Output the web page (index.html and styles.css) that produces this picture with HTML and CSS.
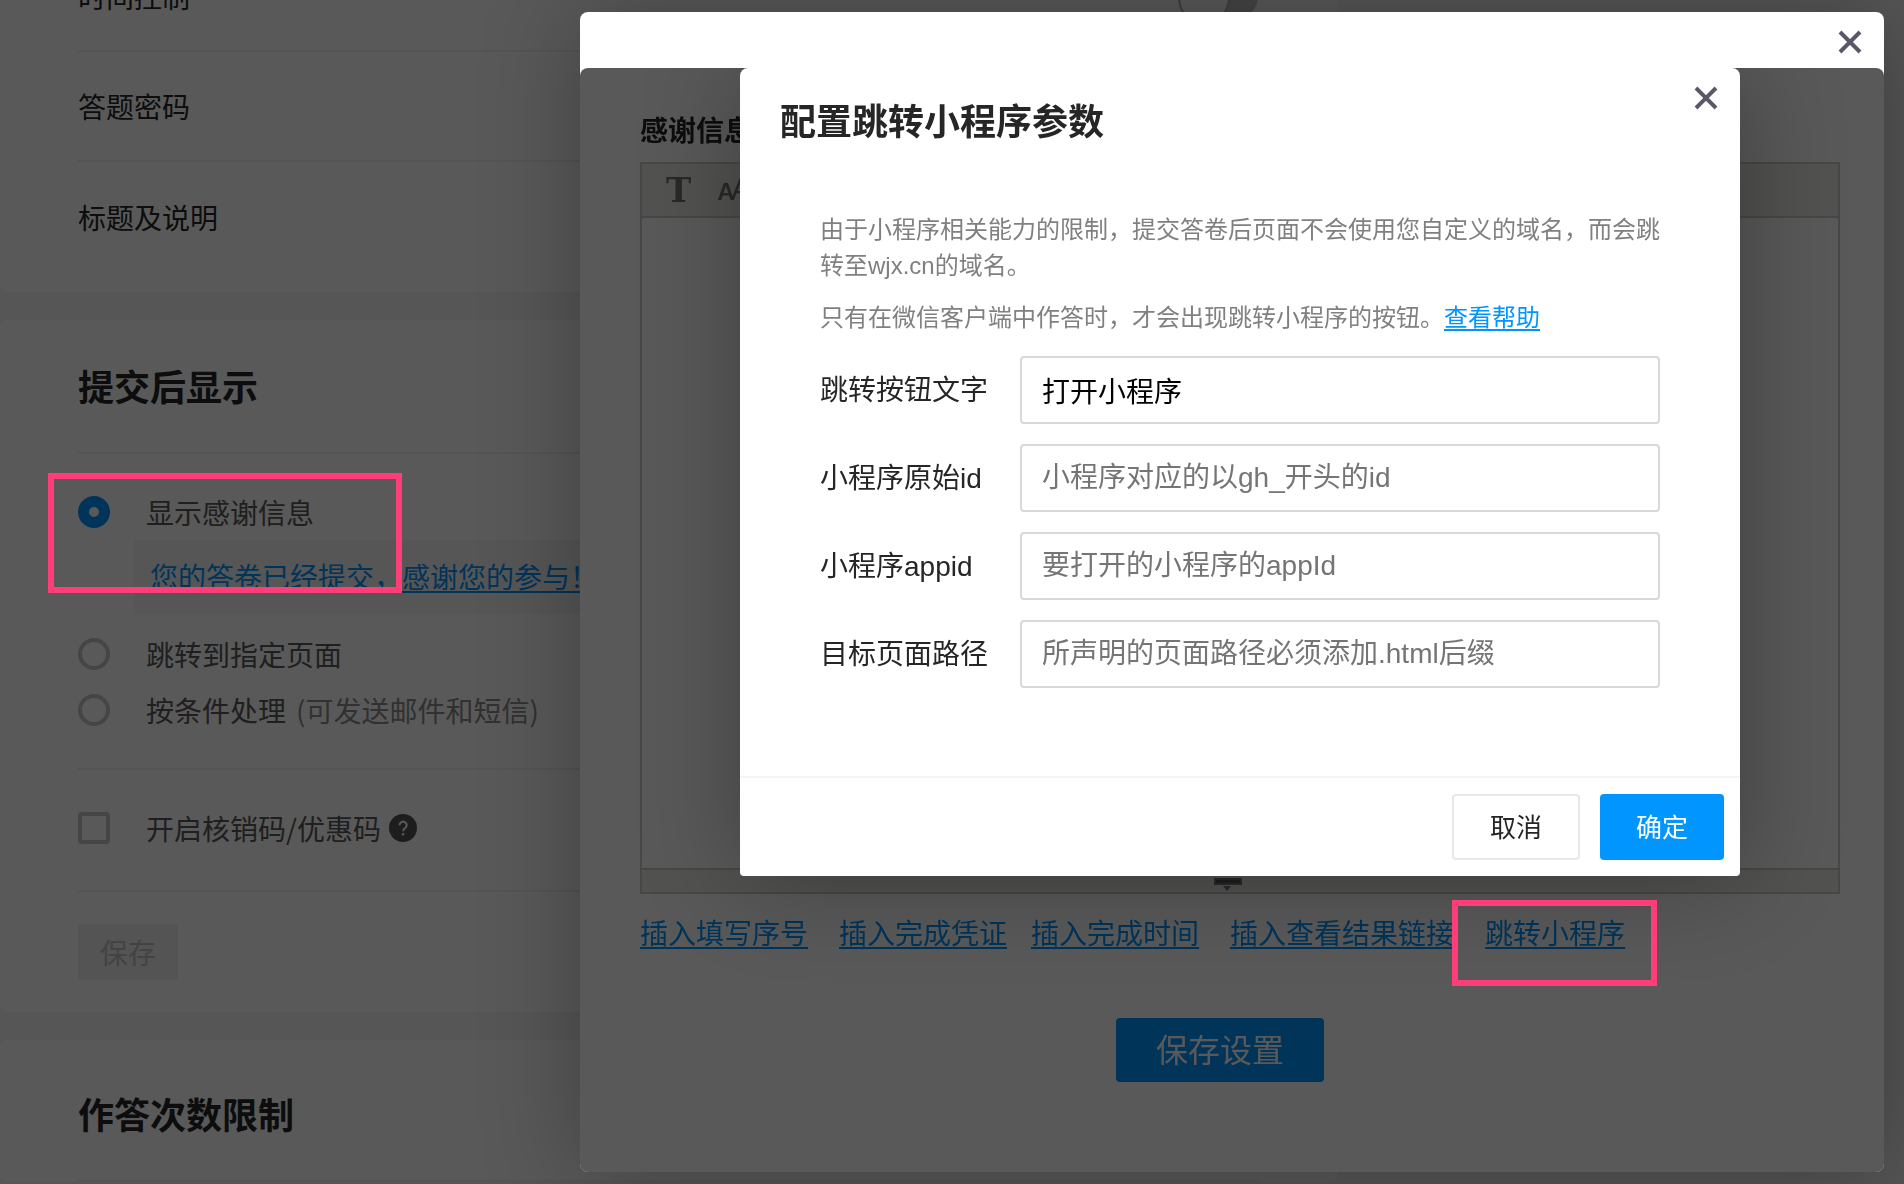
FILE: index.html
```html
<!DOCTYPE html>
<html lang="zh-CN">
<head>
  <meta charset="UTF-8">
  <meta name="viewport" content="width=device-width, initial-scale=1.0">
  <title>问卷设置</title>
  <link rel="stylesheet" href="styles.css">
</head>
<body>
  <main class="settings">
    <section class="panel">
      <div class="row">
        <label for="timeControl">时间控制</label>
        <input type="checkbox" class="switch" id="timeControl">
      </div>
      <div class="row">答题密码</div>
      <div class="row">标题及说明</div>
    </section>

    <section class="panel">
      <h2>提交后显示</h2>
      <div class="options">
        <div class="option">
          <input type="radio" name="afterSubmit" id="showThanks" checked>
          <label for="showThanks">显示感谢信息</label>
        </div>
        <div class="thanks-box"><a href="#">您的答卷已经提交，感谢您的参与！</a></div>
        <div class="option">
          <input type="radio" name="afterSubmit" id="jumpPage">
          <label for="jumpPage">跳转到指定页面</label>
        </div>
        <div class="option">
          <input type="radio" name="afterSubmit" id="byCondition">
          <label for="byCondition">按条件处理<span class="hint">(可发送邮件和短信)</span></label>
        </div>
      </div>
      <div class="option coupon">
        <input type="checkbox" class="check" id="coupon">
        <label for="coupon">开启核销码/优惠码</label>
        <svg class="help" viewBox="0 0 28 28" aria-hidden="true">
          <circle cx="14" cy="14" r="14" fill="#555"/>
          <path d="M10.500 11.200a3.600 3.600 0 1 1 5.600 3c-1.400.9-2 1.500-2 3" fill="none" stroke="#fff" stroke-width="2"/>
          <circle cx="14.100" cy="20.200" r="1.300" fill="#fff"/>
        </svg>
      </div>
      <div class="panel-foot">
        <button type="button" class="btn-save" disabled>保存</button>
      </div>
    </section>

    <section class="panel">
      <h2 class="tall">作答次数限制</h2>
    </section>
  </main>

  <div class="shade"></div>

  <div class="modal">
    <div class="modal-head">
      <button type="button" class="close" aria-label="关闭">
        <svg viewBox="0 0 24 24"><path d="M2 2L22 22M22 2L2 22"/></svg>
      </button>
    </div>
    <div class="frame">
      <div class="frame-body">
        <label class="editor-label" for="thanksText">感谢信息</label>
        <div class="editor">
          <div class="toolbar">
            <span class="tool-font">T</span>
            <span class="tool-size"><small>A</small>A</span>
          </div>
          <textarea id="thanksText"></textarea>
          <div class="statusbar">
            <svg viewBox="0 0 28 14" aria-hidden="true">
              <rect width="28" height="7" fill="#777"/>
              <rect x="2" y="2" width="24" height="3" fill="#555"/>
              <path d="M9 8h8l-4 5z" fill="#777"/>
            </svg>
          </div>
        </div>
        <div class="inserts">
          <a href="#">插入填写序号</a>
          <a href="#">插入完成凭证</a>
          <a href="#" class="close-by">插入完成时间</a>
          <a href="#">插入查看结果链接</a>
          <a href="#">跳转小程序</a>
        </div>
        <button type="button" class="btn-submit">保存设置</button>
      </div>

      <div class="shade"></div>

      <form class="dialog">
        <div class="dialog-head">
          <h3>配置跳转小程序参数</h3>
          <button type="button" class="close" aria-label="关闭">
            <svg viewBox="0 0 24 24"><path d="M2 2L22 22M22 2L2 22"/></svg>
          </button>
        </div>
        <div class="dialog-body">
          <p>由于小程序相关能力的限制，提交答卷后页面不会使用您自定义的域名，而会跳转至wjx.cn的域名。</p>
          <p>只有在微信客户端中作答时，才会出现跳转小程序的按钮。<a href="#">查看帮助</a></p>
          <div class="field">
            <label for="btnText">跳转按钮文字</label>
            <input type="text" id="btnText" value="打开小程序">
          </div>
          <div class="field">
            <label for="originId">小程序原始id</label>
            <input type="text" id="originId" placeholder="小程序对应的以gh_开头的id">
          </div>
          <div class="field">
            <label for="appId">小程序appid</label>
            <input type="text" id="appId" placeholder="要打开的小程序的appId">
          </div>
          <div class="field">
            <label for="pagePath">目标页面路径</label>
            <input type="text" id="pagePath" placeholder="所声明的页面路径必须添加.html后缀">
          </div>
        </div>
        <div class="dialog-foot">
          <button type="button" class="btn-cancel">取消</button>
          <button type="button" class="btn-ok">确定</button>
        </div>
      </form>
    </div>
  </div>

  <div class="mark mark-thanks"></div>
  <div class="mark mark-jump"></div>
</body>
</html>
```
FILE: styles.css
```css
* {
  margin: 0;
  padding: 0;
  box-sizing: border-box;
}
body {
  height: 100vh;
  overflow: hidden;
  font-family: "Liberation Sans", "Noto Sans CJK SC", sans-serif;
  font-size: 28px;
  line-height: 40px;
  color: #262626;
  background: #f5f5f5;
}
button, input, textarea {
  font-family: inherit;
  font-size: inherit;
}
button {
  border: none;
  border-radius: 4px;
  cursor: pointer;
}
a {
  color: #0095ff;
  text-decoration-thickness: 2px;
  text-underline-offset: 3px;
}

/* settings page */
.settings {
  width: calc(100% - 566px);
  margin-top: -58px;
  font-family: "Noto Sans CJK SC", sans-serif;
}
.panel {
  margin-bottom: 28px;
  padding: 0 80px 0 78px;
  border-radius: 8px;
  background: #fff;
}
.row {
  display: flex;
  align-items: center;
  justify-content: space-between;
  height: 110px;
  border-bottom: 2px solid #f0f0f0;
}
.row:last-child {
  height: 130px;
  padding-bottom: 20px;
  border-bottom: none;
}
.switch {
  appearance: none;
  width: 80px;
  height: 48px;
  border-radius: 24px;
  background: #c5c5c5;
}
.switch::before {
  content: "";
  display: block;
  width: 48px;
  height: 48px;
  border: 2px solid #a9b7c2;
  border-radius: 50%;
  background: #fff;
}
h2 {
  padding-bottom: 2px;
  font-size: 36px;
  line-height: 130px;
  border-bottom: 2px solid #f0f0f0;
}
h2.tall {
  padding-top: 8px;
}
.options {
  padding: 30px 0;
  border-bottom: 2px solid #f0f0f0;
}
.option {
  display: flex;
  align-items: center;
  height: 56px;
  color: #595959;
}
.option input {
  appearance: none;
  width: 32px;
  height: 32px;
  margin-right: 36px;
  border: 4px solid #c5c5c5;
  border-radius: 50%;
}
.option input:checked {
  border: 11px solid #0095ff;
}
.option .check {
  border-radius: 4px;
}
.hint {
  margin-left: 10px;
  color: #8c8c8c;
}
.thanks-box {
  height: 74px;
  margin: 0 0 12px 56px;
  padding: 0 16px;
  line-height: 72px;
  background: #f5f5f5;
}
.coupon {
  height: 122px;
  padding-bottom: 4px;
  border-bottom: 2px solid #f0f0f0;
}
.help {
  width: 28px;
  height: 28px;
  margin-left: 8px;
}
.panel-foot {
  padding: 32px 0;
}
.btn-save {
  display: block;
  width: 100px;
  height: 56px;
  color: #bfbfbf;
  background: #f0f0f0;
}

/* outer modal */
.shade {
  position: absolute;
  inset: 0;
  background: rgba(0, 0, 0, 0.65);
}
.modal {
  position: fixed;
  top: 12px;
  right: 20px;
  bottom: 12px;
  left: 580px;
  display: flex;
  flex-direction: column;
  border-radius: 8px;
  background: #fff;
  box-shadow: 2px 2px 100px rgba(0, 0, 0, 0.3);
}
.modal-head {
  display: flex;
  align-items: center;
  justify-content: flex-end;
  height: 56px;
  padding: 4px 22px 0;
}
.close {
  width: 24px;
  height: 24px;
  background: none;
}
.close svg {
  display: block;
  fill: none;
  stroke: #5a5866;
  stroke-width: 4;
}
.frame {
  position: relative;
  flex: 1;
  overflow: hidden;
  border-radius: 8px;
}
.frame-body {
  display: flex;
  flex-direction: column;
  padding: 44px 44px 0 60px;
}
.editor-label {
  margin-bottom: 10px;
  font-weight: bold;
}
.editor {
  display: flex;
  flex-direction: column;
  height: 732px;
  border: 2px solid #ccc;
}
.toolbar {
  display: flex;
  align-items: center;
  gap: 26px;
  height: 54px;
  padding-left: 24px;
  border-bottom: 2px solid #ccc;
  color: #777;
  background: #ecebe6;
}
.tool-font {
  font: bold 34px "DejaVu Serif", serif;
}
.tool-size {
  display: flex;
  align-items: baseline;
  font-size: 32px;
}
.tool-size small {
  margin-right: -4px;
  font-size: 24px;
  font-weight: bold;
}
.editor textarea {
  flex: 1;
  border: none;
  resize: none;
}
.statusbar {
  display: flex;
  align-items: flex-end;
  justify-content: center;
  height: 24px;
  padding-right: 24px;
  border-top: 2px solid #ccc;
  background: #ecebe6;
}
.statusbar svg {
  width: 28px;
  height: 14px;
}
.inserts {
  display: flex;
  gap: 31px;
  margin-top: 21px;
}
.inserts .close-by {
  margin-left: -7px;
}
.btn-submit {
  align-self: center;
  width: 208px;
  height: 64px;
  margin: 63px 40px 0 0;
  padding-bottom: 4px;
  font-size: 32px;
  color: #fff;
  background: #0095ff;
}

/* mini program dialog */
.dialog {
  position: absolute;
  top: 0;
  left: 160px;
  width: 1000px;
  border-radius: 8px 8px 4px 4px;
  background: #fff;
  box-shadow: 2px 2px 100px rgba(0, 0, 0, 0.3);
}
.dialog-head {
  display: flex;
  justify-content: space-between;
  padding: 18px 22px 0 40px;
}
h3 {
  padding-top: 2px;
  font-size: 36px;
  line-height: 70px;
}
.dialog-body {
  padding: 54px 80px 88px;
}
.dialog-body p {
  margin-bottom: 16px;
  font-size: 24px;
  line-height: 36px;
  color: #808080;
}
.field {
  display: flex;
  align-items: center;
  margin-top: 20px;
}
.field label {
  width: 200px;
  padding-top: 2px;
}
.field input {
  flex: 1;
  height: 68px;
  padding: 0 20px;
  border: 2px solid #d9d9d9;
  border-radius: 4px;
  color: #000;
}
.field input::placeholder {
  color: #757575;
}
.dialog-foot {
  display: flex;
  justify-content: flex-end;
  gap: 20px;
  padding: 16px;
  border-top: 2px solid #f5f5f5;
}
.dialog-foot button {
  height: 66px;
  padding-bottom: 4px;
  font-size: 26px;
}
.btn-cancel {
  width: 128px;
  border: 2px solid #e8e8e8;
  color: #262626;
  background: #fff;
}
.btn-ok {
  width: 124px;
  color: #fff;
  background: #0095ff;
}

/* highlight frames */
.mark {
  position: absolute;
  border: 6px solid #ff3d78;
}
.mark-thanks {
  top: 473px;
  left: 48px;
  width: 354px;
  height: 120px;
}
.mark-jump {
  top: 900px;
  left: 1452px;
  width: 205px;
  height: 86px;
}
```
